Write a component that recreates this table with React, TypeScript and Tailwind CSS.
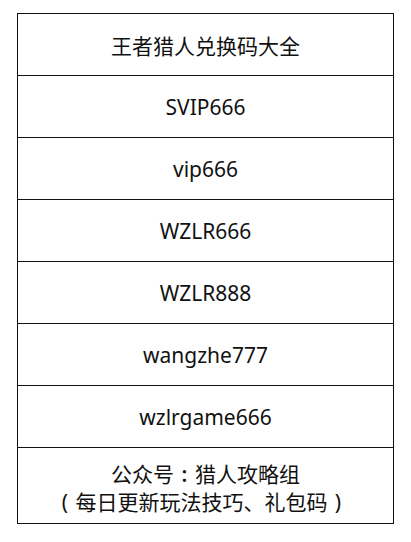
import React from "react";

const codes = ["SVIP666", "vip666", "WZLR666", "WZLR888", "wangzhe777", "wzlrgame666"];

export default function App() {
  return (
    <div
      className="w-[411px] h-[542px] bg-white pt-[13px] pl-[17px] text-[#111]"
      style={{ fontFamily: '"Noto Sans", "Noto Sans CJK SC", sans-serif' }}
    >
      <div className="w-[377px] border border-[#111] border-b-0">
        <div className="h-[62px] border-b border-[#111] flex items-center justify-center text-[21px] leading-none pt-[3px]">
          王者猎人兑换码大全
        </div>
        {codes.map((c) => (
          <div
            key={c}
            className="h-[62px] border-b border-[#111] flex items-center justify-center text-[21px] leading-none pt-[1px]"
          >
            {c}
          </div>
        ))}
        <div className="h-[76px] border-b border-[#111] flex flex-col items-center justify-center text-[21px] leading-[28px] pt-[4px]">
          <div className="flex">
            <span>公众号</span>
            <span className="w-[21px] text-center font-semibold">:</span>
            <span>猎人攻略组</span>
          </div>
          <div className="flex pr-[8px]">
            <span className="w-[21px] text-center">(</span>
            <span>每日更新玩法技巧、礼包码</span>
            <span className="w-[21px] text-center">)</span>
          </div>
        </div>
      </div>
    </div>
  );
}
